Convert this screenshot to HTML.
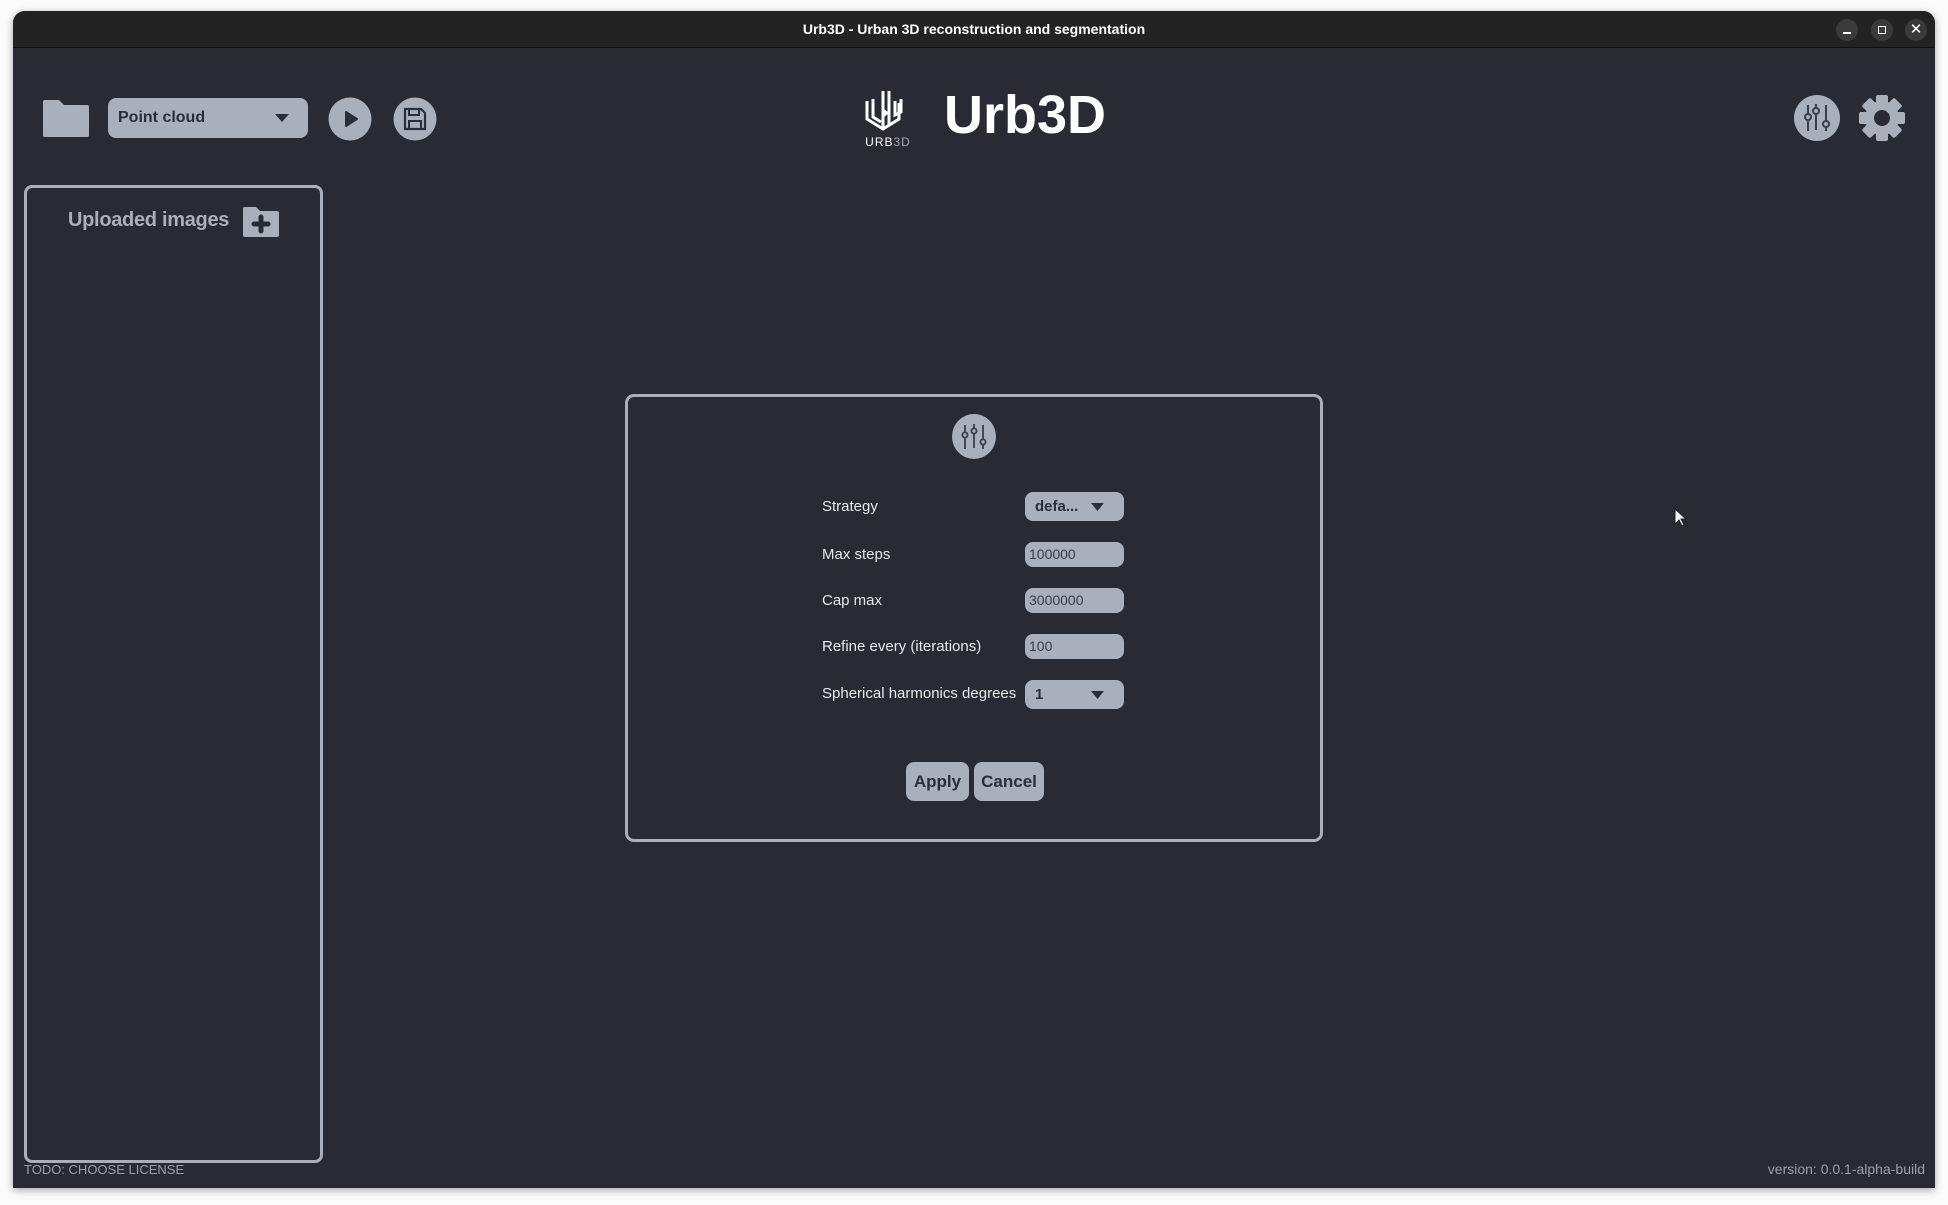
<!DOCTYPE html>
<html><head><meta charset="utf-8"><style>
*{margin:0;padding:0;box-sizing:border-box}
body{width:1948px;height:1205px;background:#fbfbfb;position:relative;overflow:hidden;font-family:"Liberation Sans",sans-serif}
.win{position:absolute;left:13px;top:11px;width:1922px;height:1177px;background:#282b34;border-radius:12px 12px 0 0;overflow:hidden;box-shadow:0 2px 8px rgba(0,0,0,.35)}
.tb{position:absolute;left:0;top:0;width:100%;height:37px;background:#232323;border-bottom:1px solid #111;color:#fff;font-weight:bold;font-size:14px;text-align:center;line-height:36px}
.wc{position:absolute;top:8px;width:22px;height:22px;border-radius:50%;background:#3a3a3a}
.abs{position:absolute}
.pill{background:#a9b0bc;border-radius:8px}
.lbl{position:absolute;left:809px;color:#e8e8e8;font-size:15px}
.inp{position:absolute;left:1012px;width:99px;height:25px;background:#a9b0bc;border-radius:8px;color:#3a3e46;font-size:14px;padding-left:4px;line-height:25px}
.btn{position:absolute;top:751px;height:39px;background:#a9b0bc;border-radius:8px;color:#2a2e37;font-weight:bold;font-size:17px;text-align:center;line-height:39px}
</style></head><body>
<div class="win">
<div class="tb">Urb3D - Urban 3D reconstruction and segmentation</div>
<div class="wc" style="left:1823px"><div class="abs" style="left:7px;top:13px;width:8px;height:1.5px;background:#fff"></div></div>
<div class="wc" style="left:1858px"><div class="abs" style="left:7px;top:7px;width:8px;height:8px;border:1.5px solid #fff"></div></div>
<div class="wc" style="left:1892px;color:#fff;font-size:15px;text-align:center;line-height:22px">✕</div>

<svg class="abs" style="left:30px;top:89px" width="46" height="37" viewBox="0 0 46 37"><path d="M2 0h14l5 5h23a2 2 0 0 1 2 2v28a2 2 0 0 1-2 2H2a2 2 0 0 1-2-2V2a2 2 0 0 1 2-2z" fill="#a9b0bc"/></svg>
<div class="abs pill" style="left:95px;top:87px;width:200px;height:40px;color:#2a2e37;font-weight:bold;font-size:16px;line-height:40px;padding-left:10px">Point cloud
<svg class="abs" style="left:167px;top:16px" width="14" height="9"><path d="M0 0h14L7 8z" fill="#2a2e37"/></svg></div>
<svg class="abs" style="left:315px;top:86px" width="44" height="44"><circle cx="22" cy="22" r="21.5" fill="#a9b0bc"/><path d="M18 15v14l11-7z" fill="#2a2e37" stroke="#2a2e37" stroke-width="2" stroke-linejoin="round"/></svg>
<svg class="abs" style="left:380px;top:86px" width="44" height="44"><circle cx="22" cy="22" r="21.5" fill="#a9b0bc"/><path d="M12 12h16l4 4v16H12z" fill="none" stroke="#2a2e37" stroke-width="2.2"/><path d="M16 12v6h10v-6M16 32v-8h12v8" fill="none" stroke="#2a2e37" stroke-width="2"/></svg>

<svg class="abs" style="left:850px;top:76px" width="44" height="50" viewBox="0 0 44 50"><g fill="none" stroke="#fff" stroke-width="3"><path d="M4 14v18l16 10 16-10V16"/><path d="M10 12v18l8 5"/><path d="M20 4v38M26 4v34"/><path d="M32 14v14l6-3V12"/></g><path d="M21 22l5 4-5 4z" fill="#fff"/></svg>
<div class="abs" style="left:845px;top:124px;width:60px;text-align:center;color:#fff;font-size:12px;letter-spacing:1px">URB<span style="color:#aaa">3D</span></div>
<div class="abs" style="left:931px;top:74px;color:#fff;font-weight:bold;font-size:54px;line-height:60px">Urb3D</div>

<svg class="abs" style="left:1781px;top:84px" width="46" height="46"><circle cx="23" cy="23" r="23" fill="#a9b0bc"/><g stroke="#3a3e46" stroke-width="2" fill="#a9b0bc"><path d="M14 10v26M22 9v26M32 10v26"/><circle cx="14" cy="22" r="3"/><circle cx="22" cy="16" r="3"/><circle cx="32" cy="29" r="3"/></g></svg>
<svg class="abs" style="left:1846px;top:84px" width="46" height="46" viewBox="-23 -23 46 46"><g fill="#a9b0bc"><circle r="17"/><g id="t"><rect x="-6" y="-23" width="12" height="10" rx="2"/></g><use href="#t" transform="rotate(45)"/><use href="#t" transform="rotate(90)"/><use href="#t" transform="rotate(135)"/><use href="#t" transform="rotate(180)"/><use href="#t" transform="rotate(225)"/><use href="#t" transform="rotate(270)"/><use href="#t" transform="rotate(315)"/></g><circle r="8" fill="#282b34"/></svg>

<div class="abs" style="left:11px;top:174px;width:299px;height:978px;border:3px solid #a9b0bc;border-radius:8px"></div>
<div class="abs" style="left:55px;top:198px;color:#a9b0bc;font-weight:bold;font-size:20px;letter-spacing:-0.3px">Uploaded images</div>
<svg class="abs" style="left:230px;top:196px" width="36" height="30" viewBox="0 0 36 30"><path d="M2 0h11l4 4h17a2 2 0 0 1 2 2v22a2 2 0 0 1-2 2H2a2 2 0 0 1-2-2V2a2 2 0 0 1 2-2z" fill="#a9b0bc"/><path d="M18 10v14M11 17h14" stroke="#282b34" stroke-width="5" stroke-linecap="round"/></svg>

<div class="abs" style="left:612px;top:383px;width:698px;height:448px;border:3px solid #a9b0bc;border-radius:9px"></div>
<svg class="abs" style="left:939px;top:403px" width="44" height="45"><ellipse cx="22" cy="22.5" rx="22" ry="22.5" fill="#a9b0bc"/><g stroke="#3a3e46" stroke-width="1.8" fill="#a9b0bc"><path d="M13 11v24M22 10v24M31 11v24"/><circle cx="13" cy="21" r="2.6"/><circle cx="22" cy="17" r="2.6"/><circle cx="31" cy="28" r="2.6"/></g></svg>

<div class="lbl" style="top:487px">Strategy</div>
<div class="inp" style="top:481px;height:29px;line-height:29px;font-weight:bold;color:#2a2e37;padding-left:10px;font-size:15px">defa...<svg class="abs" style="left:66px;top:11px" width="13" height="8"><path d="M0 0h13L6.5 8z" fill="#2a2e37"/></svg></div>
<div class="lbl" style="top:535px">Max steps</div>
<div class="inp" style="top:531px">100000</div>
<div class="lbl" style="top:581px">Cap max</div>
<div class="inp" style="top:577px">3000000</div>
<div class="lbl" style="top:627px">Refine every (iterations)</div>
<div class="inp" style="top:623px">100</div>
<div class="lbl" style="top:674px">Spherical harmonics degrees</div>
<div class="inp" style="top:669px;height:29px;line-height:29px;font-weight:bold;color:#2a2e37;padding-left:10px;font-size:15px">1<svg class="abs" style="left:66px;top:11px" width="13" height="8"><path d="M0 0h13L6.5 8z" fill="#2a2e37"/></svg></div>

<div class="btn" style="left:893px;width:63px">Apply</div>
<div class="btn" style="left:961px;width:70px">Cancel</div>

<svg class="abs" style="left:1661px;top:497px" width="14" height="20"><path d="M1 1v15l4-4 3 6 2-1-3-6h5z" fill="#fff" stroke="#222" stroke-width="1"/></svg>

<div class="abs" style="left:11px;top:1151px;color:#9aa0aa;font-size:13px">TODO: CHOOSE LICENSE</div>
<div class="abs" style="right:10px;top:1150px;color:#9aa0aa;font-size:14px">version: 0.0.1-alpha-build</div>
</div>
</body></html>
